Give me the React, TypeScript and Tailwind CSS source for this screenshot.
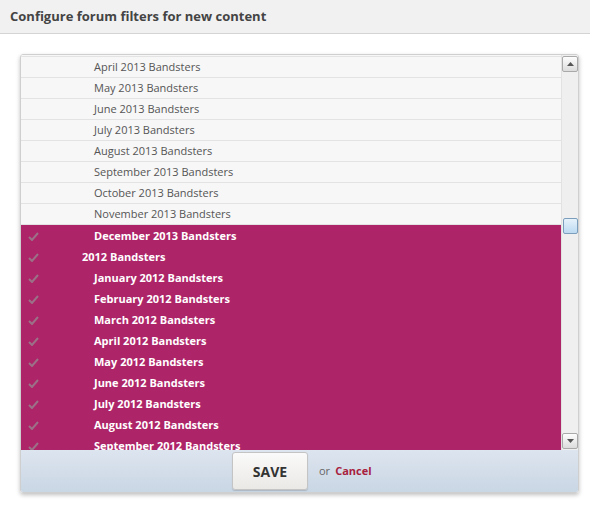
import React from 'react';

type Row = { label: string; level: 1 | 2; picked: boolean };

const rows: Row[] = [
  { label: 'March 2013 Bandsters', level: 2, picked: false },
  { label: 'April 2013 Bandsters', level: 2, picked: false },
  { label: 'May 2013 Bandsters', level: 2, picked: false },
  { label: 'June 2013 Bandsters', level: 2, picked: false },
  { label: 'July 2013 Bandsters', level: 2, picked: false },
  { label: 'August 2013 Bandsters', level: 2, picked: false },
  { label: 'September 2013 Bandsters', level: 2, picked: false },
  { label: 'October 2013 Bandsters', level: 2, picked: false },
  { label: 'November 2013 Bandsters', level: 2, picked: false },
  { label: 'December 2013 Bandsters', level: 2, picked: true },
  { label: '2012 Bandsters', level: 1, picked: true },
  { label: 'January 2012 Bandsters', level: 2, picked: true },
  { label: 'February 2012 Bandsters', level: 2, picked: true },
  { label: 'March 2012 Bandsters', level: 2, picked: true },
  { label: 'April 2012 Bandsters', level: 2, picked: true },
  { label: 'May 2012 Bandsters', level: 2, picked: true },
  { label: 'June 2012 Bandsters', level: 2, picked: true },
  { label: 'July 2012 Bandsters', level: 2, picked: true },
  { label: 'August 2012 Bandsters', level: 2, picked: true },
  { label: 'September 2012 Bandsters', level: 2, picked: true },
  { label: 'October 2012 Bandsters', level: 2, picked: true },
];

const Tick = () => (
  <svg width="11" height="9" viewBox="0 0 11 9" className="text-[#9c7187]">
    <path d="M1 5 L4 8 L10 1" fill="none" stroke="currentColor" strokeWidth="2" />
  </svg>
);

const Arrow = ({ up }: { up: boolean }) => (
  <div className="w-[16px] h-[16px] border border-[#a9a9a9] rounded-[2px] bg-gradient-to-b from-[#fdfdfd] to-[#dcdcdc] flex items-center justify-center">
    <svg width="7" height="4" viewBox="0 0 7 4">
      <path d={up ? 'M0 4 L3.5 0 L7 4 Z' : 'M0 0 L3.5 4 L7 0 Z'} fill="#555" />
    </svg>
  </div>
);

export default function App() {
  return (
    <div className="w-[590px] h-[506px] bg-white font-['Open_Sans',sans-serif]">
      {/* titulek */}
      <div className="h-[34px] bg-[#f1f1f1] border-b border-[#d4d4d4] flex items-center px-[10px]">
        <h2 className="text-[13px] font-bold text-[#444]">Configure forum filters for new content</h2>
      </div>

      <div className="mt-[20px] ml-[20px] w-[559px] border border-[#cfcfcf] rounded-[3px] shadow-[0_2px_4px_rgba(0,0,0,0.25)] overflow-hidden">
        <div className="h-[395px] flex">
          <div className="flex-1 overflow-hidden">
            <div className="-mt-[19px]">
              {rows.map((r, i) => (
                <div
                  key={i}
                  className={
                    r.picked
                      ? 'h-[21px] pt-[1px] flex items-center bg-[#ae2468] text-white font-bold text-[11px]'
                      : 'h-[21px] pt-[1px] flex items-center bg-[#f7f7f7] border-b border-[#e3e3e3] text-[#555] text-[11px]'
                  }
                >
                  <div className="w-[20px] ml-[2px] flex justify-center">{r.picked && <Tick />}</div>
                  <span className={r.level === 1 ? 'ml-[39px]' : 'ml-[51px]'}>{r.label}</span>
                </div>
              ))}
            </div>
          </div>

          {/* pasek przewijania */}
          <div className="w-[17px] bg-[#efefef] border-l border-[#e2e2e2] flex flex-col items-center">
            <div className="mt-[1px]">
              <Arrow up />
            </div>
            <div className="mt-[146px] w-[15px] h-[16px] border border-[#7b9ebd] rounded-[2px] bg-gradient-to-b from-[#e6f2fb] to-[#bcdaf1]" />
            <div className="mt-auto mb-[1px]">
              <Arrow up={false} />
            </div>
          </div>
        </div>

        <div className="h-[42px] bg-gradient-to-b from-[#dde5ef] to-[#c9d6e4] flex items-center">
          <button className="ml-[211px] h-[38px] w-[76px] rounded-[3px] border border-[#c4c4c4] bg-gradient-to-b from-[#fafafa] to-[#ebe9e6] text-[14px] font-bold text-[#333] shadow-[0_1px_1px_rgba(0,0,0,0.15)]">
            SAVE
          </button>
          <span className="ml-[11px] text-[11px] text-[#666]">or</span>
          <a className="ml-[5px] text-[11px] font-bold text-[#a8213d]">Cancel</a>
        </div>
      </div>
    </div>
  );
}
